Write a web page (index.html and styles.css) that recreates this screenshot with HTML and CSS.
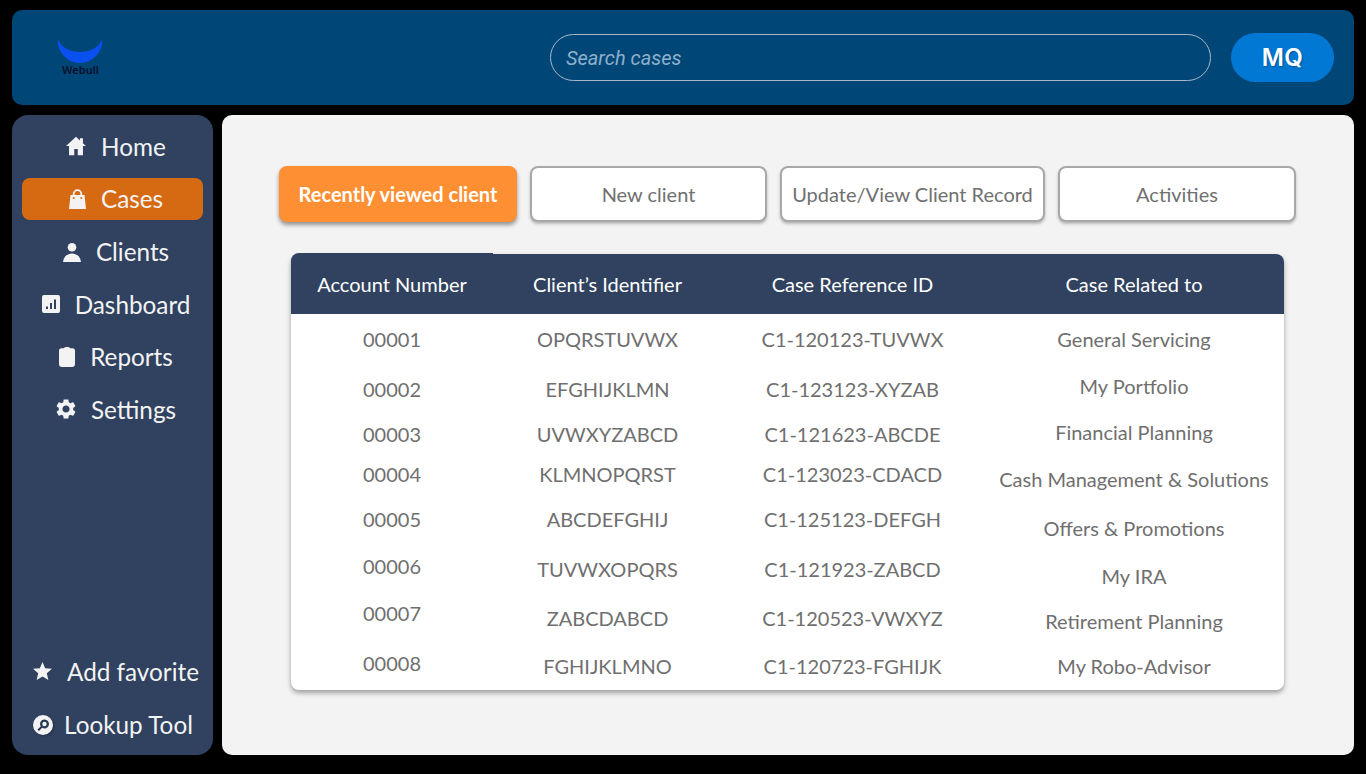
FILE: index.html
```html
<!DOCTYPE html>
<html lang="en">
<head>
  <meta charset="UTF-8" />
  <title>Webull | Cases</title>
  <link rel="stylesheet" href="styles.css">
</head>
<body>
  <header class="topbar">
    <div class="logo">
      <svg class="logo-mark" viewBox="0 0 46 26"><path d="M1 1C2 9 12 15 23 15C34 15 44 9 45 1C47 14 36 26 23 26C10 26 -1 14 1 1Z"/></svg>
      <span class="logo-name">Webull</span>
    </div>
    <input class="search" type="text" placeholder="Search cases" />
    <button class="avatar">MQ</button>
  </header>

  <div class="main">
    <nav class="sidebar">
      <ul class="nav">
        <li class="nav-item">
          <svg class="icon icon-home" viewBox="0 0 23 22"><path d="M11.500 0.500L0 11H3.500V21.500H9.500V14.500H13.500V21.500H19.500V11H23L19.500 7.800V2H16V4.600Z"/></svg>
          <span>Home</span>
        </li>
        <li class="nav-item active">
          <svg class="icon icon-bag" viewBox="0 0 17 20"><path fill-rule="evenodd" d="M3.800 6V5A4.700 4.700 0 0 1 13.200 5V6H15.500L17 20H0L1.500 6ZM5.600 6H11.400V5A2.900 2.900 0 0 0 5.600 5ZM4.700 8A1 1 0 1 0 4.700 10A1 1 0 1 0 4.700 8ZM12.300 8A1 1 0 1 0 12.300 10A1 1 0 1 0 12.300 8Z"/></svg>
          <span>Cases</span>
        </li>
        <li class="nav-item">
          <svg class="icon icon-person" viewBox="0 0 18 19"><circle cx="9" cy="4.300" r="4.300"/><path d="M0 19C0.500 13.500 4.500 10.500 9 10.500C13.500 10.500 17.500 13.500 18 19Z"/></svg>
          <span>Clients</span>
        </li>
        <li class="nav-item">
          <svg class="icon icon-chart" viewBox="0 0 18 18"><path fill-rule="evenodd" d="M2 0H16A2 2 0 0 1 18 2V16A2 2 0 0 1 16 18H2A2 2 0 0 1 0 16V2A2 2 0 0 1 2 0ZM4 11.500V14H6V11.500ZM8 8V14H10V8ZM12 4.500V14H14V4.500Z"/></svg>
          <span>Dashboard</span>
        </li>
        <li class="nav-item">
          <svg class="icon icon-clip" viewBox="0 0 16 20"><path d="M4.500 1.200C5.500 0.300 6.500 0 8 0C9.500 0 10.500 0.300 11.500 1.200H13.500A2.500 2.500 0 0 1 16 3.700V17A3 3 0 0 1 13 20H3A3 3 0 0 1 0 17V3.700A2.500 2.500 0 0 1 2.500 1.200Z"/></svg>
          <span>Reports</span>
        </li>
        <li class="nav-item">
          <svg class="icon icon-gear" viewBox="2.500 2 19 20"><path d="M19.140 12.940c.04-.3.06-.61.06-.94 0-.32-.02-.64-.07-.94l2.030-1.580c.18-.14.23-.41.12-.61l-1.920-3.320c-.12-.22-.37-.29-.59-.22l-2.390.96c-.5-.38-1.030-.7-1.620-.94l-.36-2.540c-.04-.24-.24-.41-.48-.41h-3.840c-.24 0-.43.17-.47.41l-.36 2.540c-.59.24-1.130.57-1.620.94l-2.390-.96c-.22-.08-.47 0-.59.22L2.740 8.870c-.12.21-.08.47.12.61l2.030 1.580c-.05.3-.09.63-.09.94s.02.64.07.94l-2.030 1.580c-.18.14-.23.41-.12.61l1.920 3.320c.12.22.37.29.59.22l2.390-.96c.5.38 1.030.7 1.620.94l.36 2.540c.05.24.24.41.48.41h3.840c.24 0 .44-.17.47-.41l.36-2.540c.59-.24 1.130-.56 1.620-.94l2.390.96c.22.08.47 0 .59-.22l1.920-3.320c.12-.22.07-.47-.12-.61l-2.010-1.580zM12 15.600c-1.980 0-3.600-1.620-3.600-3.600s1.620-3.600 3.600-3.600 3.600 1.620 3.600 3.600-1.620 3.600-3.600 3.600z"/></svg>
          <span>Settings</span>
        </li>
      </ul>
      <ul class="nav">
        <li class="nav-item">
          <svg class="icon icon-star" viewBox="2 2 20 19"><path d="M12 17.270L18.180 21l-1.640-7.030L22 9.240l-7.190-.61L12 2 9.190 8.630 2 9.240l5.460 4.730L5.820 21z"/></svg>
          <span>Add favorite</span>
        </li>
        <li class="nav-item nav-lookup">
          <svg class="icon icon-lookup" viewBox="0 0 20 20"><path fill-rule="evenodd" d="M10 0A10 10 0 1 1 10 20A10 10 0 1 1 10 0ZM11.500 4.500A4.500 4.500 0 0 0 7.700 11.400L4.500 14.600L6 16L9.100 12.800A4.500 4.500 0 1 0 11.500 4.500ZM11.500 6.800A2.200 2.200 0 1 1 11.500 11.200A2.200 2.200 0 1 1 11.500 6.800Z"/></svg>
          <span>Lookup Tool</span>
        </li>
      </ul>
    </nav>

    <section class="content">
      <div class="tabs">
        <button class="tab tab-recent active">Recently viewed client</button>
        <button class="tab tab-new">New client</button>
        <button class="tab tab-update">Update/View Client Record</button>
        <button class="tab tab-activities">Activities</button>
      </div>

      <div class="cases">
        <div class="cases-head">
          <div class="head-cell head-account">Account Number</div>
          <div class="head-cell">Client’s Identifier</div>
          <div class="head-cell">Case Reference ID</div>
          <div class="head-cell">Case Related to</div>
        </div>
        <div class="cases-body">
          <div class="col col-account">
            <div>00001</div>
            <div>00002</div>
            <div>00003</div>
            <div>00004</div>
            <div>00005</div>
            <div>00006</div>
            <div>00007</div>
            <div>00008</div>
          </div>
          <div class="col col-client">
            <div>OPQRSTUVWX</div>
            <div>EFGHIJKLMN</div>
            <div>UVWXYZABCD</div>
            <div>KLMNOPQRST</div>
            <div>ABCDEFGHIJ</div>
            <div>TUVWXOPQRS</div>
            <div>ZABCDABCD</div>
            <div>FGHIJKLMNO</div>
          </div>
          <div class="col col-ref">
            <div>C1-120123-TUVWX</div>
            <div>C1-123123-XYZAB</div>
            <div>C1-121623-ABCDE</div>
            <div>C1-123023-CDACD</div>
            <div>C1-125123-DEFGH</div>
            <div>C1-121923-ZABCD</div>
            <div>C1-120523-VWXYZ</div>
            <div>C1-120723-FGHIJK</div>
          </div>
          <div class="col col-topic">
            <div>General Servicing</div>
            <div>My Portfolio</div>
            <div>Financial Planning</div>
            <div>Cash Management &amp; Solutions</div>
            <div>Offers &amp; Promotions</div>
            <div>My IRA</div>
            <div>Retirement Planning</div>
            <div>My Robo-Advisor</div>
          </div>
        </div>
      </div>
    </section>
  </div>
</body>
</html>
```

FILE: styles.css
```css
* {
  box-sizing: border-box;
}

html, body {
  height: 100%;
}

body {
  margin: 0;
  padding: 10px 12px 19px;
  background-color: #000;
  font-family: 'Lato', sans-serif;
  overflow: hidden;
}

/* top bar */
.topbar {
  height: 95px;
  display: flex;
  align-items: center;
  padding: 0 20px 0 45px;
  background-color: #004677;
  border-radius: 10px;
}

.logo {
  width: 46px;
  display: flex;
  flex-direction: column;
  align-items: center;
  margin-top: -3px;
}

.logo-mark {
  width: 46px;
  height: 26px;
  fill: #0a4fef;
}

.logo-name {
  margin: 1px 0 0 1px;
  font-family: 'Noto Sans', sans-serif;
  font-size: 11px;
  font-weight: 600;
  line-height: 12px;
  color: #05102a;
}

.search {
  width: 661px;
  height: 47px;
  margin-left: 447px;
  padding: 0 15px;
  background: transparent;
  border: 1px solid #a7b9c9;
  border-radius: 24px;
  font-family: 'Roboto', sans-serif;
  font-size: 20px;
  font-style: italic;
  color: #fff;
}

.search::placeholder {
  color: #8fb0ca;
  opacity: 1;
}

.avatar {
  width: 103px;
  height: 49px;
  margin-left: 20px;
  background-color: #0078d4;
  border: none;
  border-radius: 25px;
  font-family: 'Inter', sans-serif;
  font-size: 24px;
  font-weight: 600;
  letter-spacing: 0.5px;
  color: #fff;
  text-shadow: 1px 1px 2px rgba(0,0,0,0.3);
}

/* sidebar + content */
.main {
  display: flex;
  gap: 9px;
  height: 640px;
  margin-top: 10px;
}

.sidebar {
  width: 201px;
  display: flex;
  flex-direction: column;
  justify-content: space-between;
  padding: 10px;
  background-color: #304260;
  border-radius: 16px;
}

.nav {
  display: flex;
  flex-direction: column;
  gap: 10.700px;
  margin: 0;
  padding: 0;
  list-style: none;
}

.nav-item {
  height: 42px;
  display: flex;
  align-items: center;
  justify-content: center;
  gap: 15px;
  padding-left: 7px;
  border-radius: 8px;
  font-size: 24.300px;
  color: #f3f3f3;
}

.nav-item.active {
  background-color: #d66a12;
}

.nav-lookup {
  gap: 11px;
  padding-left: 1px;
}

.icon {
  flex: none;
  fill: #f3f3f3;
}

.icon-home { width: 20px; height: 20px; }
.icon-bag { width: 17px; height: 20px; }
.icon-person { width: 18px; height: 19px; margin-top: 2px; }
.icon-chart { width: 18px; height: 18px; }
.icon-clip { width: 16px; height: 20px; }
.icon-gear { width: 20px; height: 20px; }
.icon-star { width: 19px; height: 18px; }
.icon-lookup { width: 20px; height: 20px; margin-top: 2px; filter: drop-shadow(1px 1px 1px rgba(0,0,0,0.3)); }

/* content */
.content {
  flex: 1;
  padding: 51px 58px 0 57px;
  background-color: #f3f3f3;
  border-radius: 10px;
}

.tabs {
  display: flex;
  gap: 13px;
}

.tab {
  height: 56px;
  padding: 0;
  background: #fff;
  border: 2px solid #a8a8a8;
  border-radius: 8px;
  box-shadow: 0 2px 3px rgba(0,0,0,0.25);
  font-family: 'Lato', sans-serif;
  font-size: 20px;
  color: #707070;
}

.tab.active {
  background-color: #ff8f33;
  border-color: #ff8f33;
  color: #fff;
  font-weight: 700;
  box-shadow: 0 3px 4px rgba(0,0,0,0.4);
}

.tab-recent { width: 238px; }
.tab-new { width: 237px; }
.tab-update { width: 265px; }
.tab-activities { width: 238px; }

/* cases table */
.cases {
  width: 993px;
  margin: 32px 0 0 12px;
  background: #fff;
  border-radius: 8px;
  box-shadow: 0 3px 5px rgba(0,0,0,0.35);
}

.cases-head {
  height: 60px;
  display: grid;
  grid-template-columns: 202px 229px 261px 302px;
  background-color: #304260;
  border-radius: 8px 8px 0 0;
}

.head-cell {
  display: flex;
  align-items: center;
  justify-content: center;
  font-size: 20px;
  color: #fff;
}

/* first header cell sits a pixel higher than the rest */
.head-account {
  margin-top: -1px;
  background-color: #304260;
  border-radius: 8px 0 0 0;
}

.cases-body {
  height: 376px;
  display: grid;
  grid-template-columns: 202px 229px 261px 302px;
  padding-top: 13px;
}

.col {
  display: grid;
  text-align: center;
  font-size: 20px;
  line-height: 24px;
  color: #6f6f6f;
}

/* the rows don't line up across columns in the design */
.col-account { grid-template-rows: 50px 45px 40px 45px 47px 47px 50px 24px; }
.col-client,
.col-ref { grid-template-rows: 50px 45px 40px 45px 50px 49px 48px 24px; }
.col-topic { grid-template-rows: 47px 46px 47px 49px 48px 45px 45px 24px; }
```
